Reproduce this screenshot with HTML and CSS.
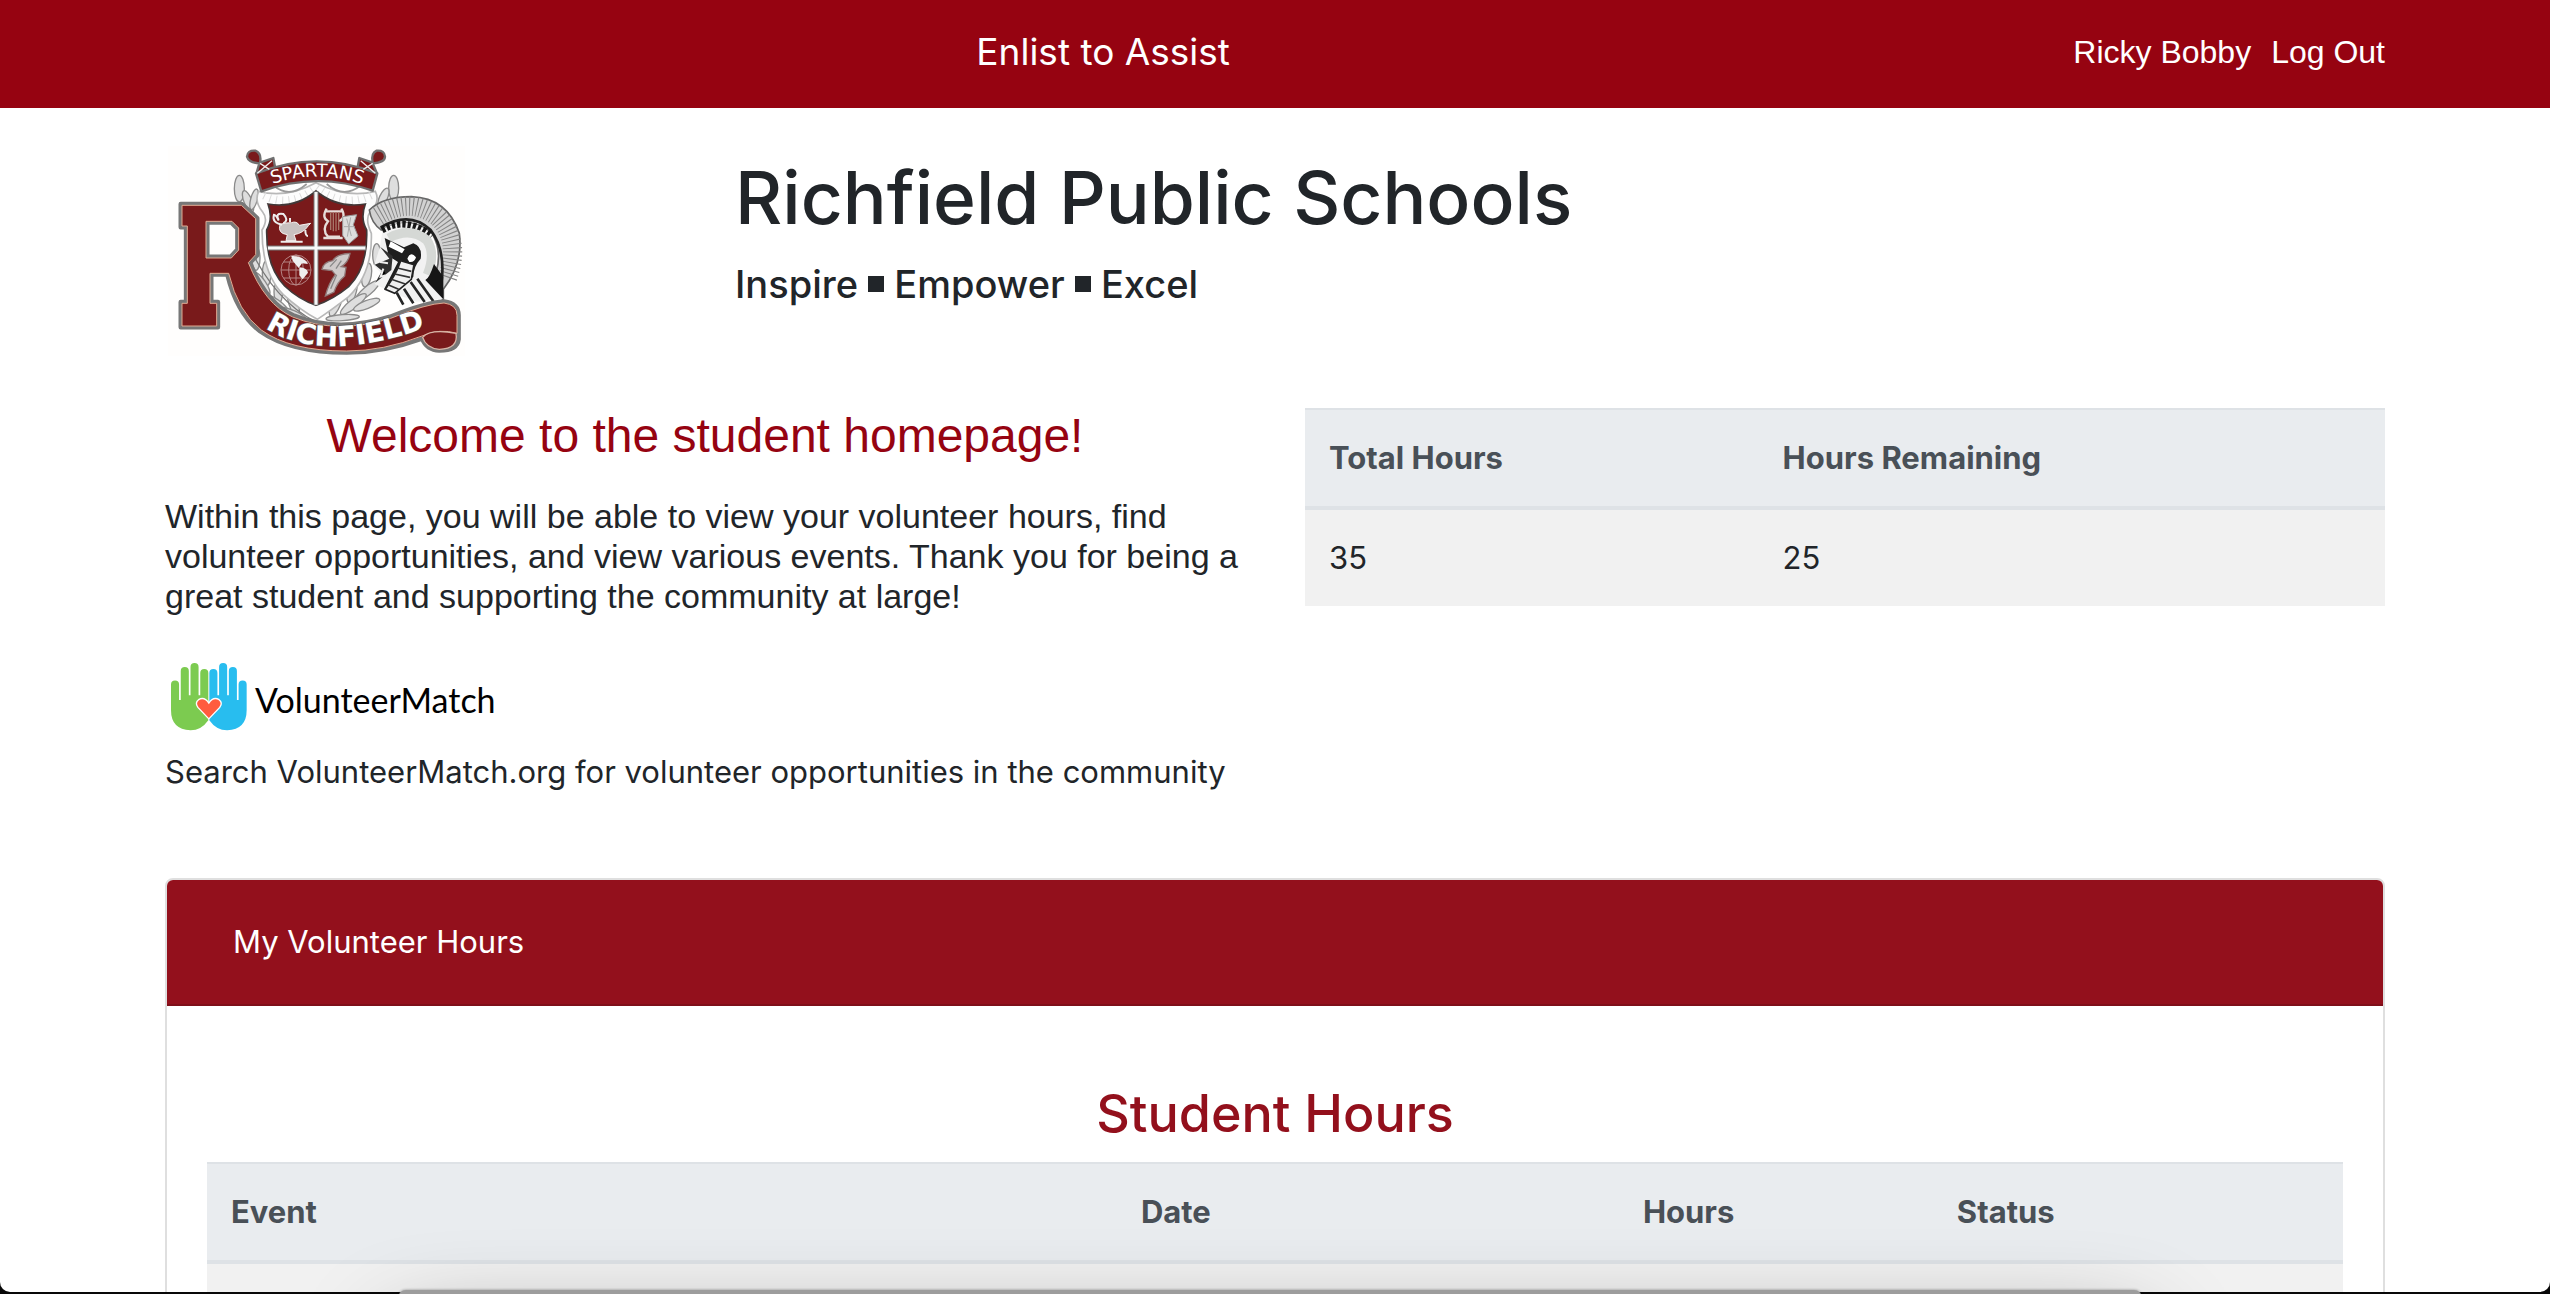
FILE: index.html
```html
<!DOCTYPE html>
<html lang="en">
<head>
<meta charset="utf-8">
<title>Enlist to Assist</title>
<link rel="stylesheet" href="styles.css">
</head>
<body>
<nav class="navbar">
  <div class="container navbar-inner">
    <span></span>
    <a class="brand" href="#">Enlist to Assist</a>
    <div class="nav-links">
      <a href="#">Ricky Bobby</a>
      <a href="#">Log Out</a>
    </div>
  </div>
</nav>

<header class="container school">
  <svg class="crest" viewBox="45 48 900 630" role="img" aria-label="Richfield Spartans crest">
    <defs>
      <path id="top-arc" d="M340 173 Q500 106 664 173"/>
      <path id="ribbon-arc" d="M302 556 C410 668 600 684 880 574"/>
    </defs>
    <rect x="54" y="48" width="900" height="630" fill="#fffefd"/>
    <!-- laurel leaves -->
    <g fill="#dedede" stroke="#8b8b8b" stroke-width="4">
      <ellipse cx="268" cy="176" rx="15" ry="40"/><ellipse cx="294" cy="214" rx="12" ry="34" transform="rotate(-22 294 214)"/>
      <ellipse cx="312" cy="208" rx="10" ry="32" transform="rotate(15 312 208)"/>
      <ellipse cx="731" cy="174" rx="15" ry="38"/><ellipse cx="700" cy="204" rx="12" ry="32" transform="rotate(24 700 204)"/>
      <ellipse cx="318" cy="385" rx="12" ry="36"/><ellipse cx="350" cy="430" rx="13" ry="38"/>
      <ellipse cx="335" cy="460" rx="12" ry="40" transform="rotate(-35 335 460)"/><ellipse cx="385" cy="486" rx="13" ry="34"/>
      <ellipse cx="378" cy="520" rx="12" ry="44" transform="rotate(-55 378 520)"/><ellipse cx="430" cy="518" rx="14" ry="40" transform="rotate(-18 430 518)"/>
      <ellipse cx="430" cy="553" rx="11" ry="44" transform="rotate(-66 430 553)"/>
      <ellipse cx="680" cy="375" rx="12" ry="34"/><ellipse cx="650" cy="435" rx="14" ry="36" transform="rotate(10 650 435)"/>
      <ellipse cx="606" cy="480" rx="14" ry="40" transform="rotate(12 606 480)"/><ellipse cx="652" cy="483" rx="13" ry="46" transform="rotate(50 652 483)"/>
      <ellipse cx="558" cy="520" rx="14" ry="42" transform="rotate(22 558 520)"/><ellipse cx="610" cy="522" rx="13" ry="48" transform="rotate(52 610 522)"/>
      <ellipse cx="650" cy="524" rx="12" ry="42" transform="rotate(68 650 524)"/><ellipse cx="578" cy="563" rx="9" ry="50" transform="rotate(86 578 563)"/>
    </g>
    <path d="M306 260 Q330 320 318 390 Q400 540 530 590" fill="none" stroke="#777" stroke-width="4"/>
    <!-- shield -->
    <path d="M326 184 Q410 206 498 158 Q590 206 676 184 Q692 215 660 246 Q644 268 664 310 Q668 430 596 500 Q545 540 502 568 Q450 540 400 494 Q336 430 336 300 Q356 268 338 246 Q312 214 326 184Z" fill="#fdfdfd" stroke="#b8b8b8" stroke-width="5"/>
    <path d="M342 196 Q420 236 499 172 Q580 236 664 196" fill="none" stroke="#dcdcdc" stroke-width="24" stroke-dasharray="3 16"/>
    <path d="M372 168 Q420 206 470 162 M530 162 Q580 206 630 168" fill="none" stroke="#999" stroke-width="5"/>
    <path d="M354 222 Q436 236 498 183 Q562 236 646 222 Q630 266 650 300 Q654 412 596 470 Q550 508 498 526 Q446 508 404 468 Q348 410 350 300 Q370 266 354 222Z" fill="#791a1b" stroke="#413838" stroke-width="5"/>
    <path d="M498 184 V526 M352 354 H648" stroke="#777" stroke-width="15"/>
    <path d="M498 186 V524 M354 354 H646" stroke="#f7f7f7" stroke-width="9"/>
    <!-- lamp -->
    <path d="M390 284 Q382 310 412 314 L408 332 H438 L432 314 Q460 310 476 286 L482 280 L448 286 Q440 272 424 278 Q398 278 390 284Z" fill="#c9c1c1" stroke="#f6f0f0" stroke-width="3"/>
    <path d="M396 284 Q364 278 372 254 Q378 254 386 272 M386 270 Q374 248 400 252 Q418 270 400 280 M420 276 V264 M466 300 Q466 318 474 318 M392 335 H458" fill="none" stroke="#eee" stroke-width="6"/>
    <!-- lyre and scroll -->
    <path d="M530 236 Q514 262 534 274 Q514 300 534 320 H570 M574 236 Q590 262 568 274 M526 244 H580 M520 324 H578" fill="none" stroke="#e6dcd9" stroke-width="7"/>
    <path d="M542 246 V300 M550 246 V304 M558 246 V304 M566 246 V300" stroke="#a77568" stroke-width="4"/>
    <path d="M578 260 L620 254 L610 284 L624 318 L596 342 L578 316Z" fill="#ddd" stroke="#999" stroke-width="3"/>
    <path d="M590 266 L604 318 M602 262 L592 320 M582 290 H614" stroke="#aaa" stroke-width="3"/>
    <!-- globe -->
    <g fill="none" stroke="#b58484" stroke-width="3">
      <circle cx="438" cy="420" r="45"/><ellipse cx="438" cy="420" rx="22" ry="45"/><path d="M393 420 H483 M400 396 H476 M400 444 H476 M438 375 V465"/>
    </g>
    <path d="M424 378 Q460 376 474 402 L456 400 L446 414 L428 392Z M448 412 Q472 414 474 428 L458 448 L448 436Z" fill="#eee"/>
    <!-- winged figure -->
    <path d="M600 370 Q560 372 548 392 Q520 396 516 418 L546 422 L556 434 Q536 460 526 498 L552 486 Q562 456 584 438 L588 412 L574 410 Q596 396 600 370Z" fill="#cfcaca" stroke="#8f7777" stroke-width="4"/>
    <path d="M560 388 L540 410 M574 392 L558 416 M560 434 L542 476" stroke="#888" stroke-width="4"/>
    <!-- Spartan helmet -->
    <path d="M658 240 Q700 200 784 200 Q892 204 928 310 Q940 400 880 478 L880 510 L840 470 Q888 380 846 310 Q790 254 694 300 Q664 280 658 240Z" fill="#d2d2d2" stroke="#666" stroke-width="5"/>
    <path d="M684 258 Q780 198 862 260 Q936 330 890 450" fill="none" stroke="#858585" stroke-width="58" stroke-dasharray="3 8"/>
    <path d="M692 292 Q780 240 842 300 Q888 360 874 462" fill="none" stroke="#222" stroke-width="8"/>
    <path d="M698 296 Q780 260 828 300 Q872 350 850 440 L880 506 L800 515 L730 490 L674 462 L694 430 L672 408 L690 350Z" fill="#f2f2f2"/>
    <path d="M696 300 Q770 258 846 318" fill="none" stroke="#161616" stroke-width="20" stroke-dasharray="10 6"/>
    <path d="M716 324 Q780 290 830 330 Q858 370 832 434" fill="none" stroke="#d5d8d5" stroke-width="28"/>
    <path d="M704 324 L762 352 L790 340 Q818 350 812 386 Q790 410 790 440 L748 480 L702 478 L744 396 L716 378Z" fill="#1e1e1e"/>
    <path d="M722 334 L764 358 L756 370 L716 350Z M772 386 Q782 362 798 382 Q794 398 778 396Z" fill="#fff"/>
    <path d="M690 350 L718 386 L674 404 L696 422 L676 458 L724 420 L728 378Z" fill="#303030"/>
    <path d="M690 396 L714 400 M700 416 L692 440 L708 436" stroke="#eee" stroke-width="6"/>
    <path d="M752 392 Q740 430 706 478 L734 490 L784 448 L792 404Z" fill="#f0f0f0" stroke="#222" stroke-width="5"/>
    <path d="M742 414 L784 424 M734 432 L780 442 M724 448 L766 462 M714 464 L746 478" stroke="#333" stroke-width="5"/>
    <path d="M852 402 Q838 446 826 450 L880 508 L880 440Z" fill="#161616"/>
    <path d="M782 456 L824 516 M802 446 L850 514 M762 476 L790 520 M740 488 L760 524" stroke="#252525" stroke-width="8"/>
    <!-- SPARTANS banner -->
    <g stroke="#707070" stroke-width="7" fill="#791a1b" stroke-linejoin="round">
      <path d="M320 128 L328 100 Q296 98 291 80 Q292 60 316 62 Q336 70 330 98 L370 84 L376 116 Z"/>
      <path d="M680 128 L668 100 Q704 98 705 80 Q704 60 680 62 Q662 70 668 98 L628 84 L622 116 Z"/>
      <path d="M318 130 Q500 58 682 130 L668 182 Q500 124 334 184Z"/>
    </g>
    <path d="M322 130 L366 92 M330 100 L358 118 M676 130 L632 92 M668 100 L640 118" stroke="#eee" stroke-width="4"/>
    <text class="crest-top"><textPath href="#top-arc" startOffset="50%" text-anchor="middle">SPARTANS</textPath></text>
    <!-- letter block with the ribbon that grows out of its leg -->
    <path fill-rule="evenodd" d="M92 222 H276 L322 264 V376 L300 398 Q350 520 430 556 Q560 610 720 560 Q830 516 882 514 Q926 520 926 556 V628 Q922 662 868 662 Q830 660 816 626 Q700 668 590 668 Q420 668 330 604 Q260 550 232 434 H184 V516 H204 V592 H92 V516 H108 V292 H92Z M172 278 V380 H242 L262 358 V296 L244 278Z" fill="#791a1b" stroke="#777" stroke-width="13" stroke-linejoin="round"/>
    <path fill-rule="evenodd" d="M96 226 H274 L317 266 V374 L295 398 Q345 524 428 561 Q560 615 722 565 Q830 521 882 519 Q921 524 921 556 V610 Q870 594 816 618 Q700 663 590 663 Q420 663 334 600 Q264 546 236 430 H180 V520 H200 V588 H96 V520 H112 V288 H96Z M168 274 V384 H244 L266 360 V294 L246 274Z" fill="#791a1b" stroke="#e0aa92" stroke-width="3"/>
    <path d="M818 622 Q840 596 918 610 Q926 656 868 658 Q828 654 818 622Z" fill="#791a1b" stroke="#d8b6a8" stroke-width="4"/>
    <text class="crest-ribbon"><textPath href="#ribbon-arc" startOffset="50%" text-anchor="middle">RICHFIELD</textPath></text>
  </svg>
  <div class="school-name">
    <h1>Richfield Public Schools</h1>
    <p class="motto">Inspire <i class="square"></i> Empower <i class="square"></i> Excel</p>
  </div>
</header>

<main class="container">
  <div class="intro">
    <section>
      <h2 class="welcome">Welcome to the student homepage!</h2>
      <p class="lead">Within this page, you will be able to view your volunteer hours, find volunteer opportunities, and view various events. Thank you for being a great student and supporting the community at large!</p>
      <a class="vm" href="#">
        <svg class="hands" viewBox="0 0 226 202" aria-hidden="true">
          <path fill="#7ccb50" d="M0 64a12 12 0 0 1 24 0v46h5V24a12 12 0 0 1 24 0v72h5V12a12 12 0 0 1 24 0v84h5V30a12 12 0 0 1 24 0V170Q90 200 58 200Q0 198 0 140Z"/>
          <path fill="#28bdef" d="M225 64a12 12 0 0 0-24 0v46h-5V24a12 12 0 0 0-24 0v72h-5V12a12 12 0 0 0-24 0v84h-5V30a12 12 0 0 0-24 0V170Q135 200 167 200Q225 198 225 140Z"/>
          <path fill="#ff5c3e" stroke="#fff" stroke-width="4" d="M112.500 166L80 132Q70 118 82 109Q99 99 112.500 119Q126 99 143 109Q155 118 145 132Z"/>
        </svg>
        <span class="vm-name">VolunteerMatch</span>
      </a>
      <p class="search-note">Search VolunteerMatch.org for volunteer opportunities in the community</p>
    </section>
    <section>
      <table class="table totals">
        <thead><tr><th scope="col">Total Hours</th><th scope="col">Hours Remaining</th></tr></thead>
        <tbody><tr><td>35</td><td>25</td></tr></tbody>
      </table>
    </section>
  </div>

  <section class="card">
    <div class="card-header"><button class="card-toggle" type="button">My Volunteer Hours</button></div>
    <div class="card-body">
      <h2 class="card-title">Student Hours</h2>
      <table class="table hours">
        <thead><tr><th scope="col">Event</th><th scope="col">Date</th><th scope="col">Hours</th><th scope="col">Status</th></tr></thead>
        <tbody><tr><td>&nbsp;</td><td></td><td></td><td></td></tr></tbody>
      </table>
    </div>
  </section>
</main>

<div class="window-behind"></div>
<div class="window-edge"></div>
</body>
</html>
```
FILE: styles.css
```css
* { box-sizing: border-box; }

body {
  margin: 0;
  height: 100vh;
  overflow: hidden;
  background: #fff;
  color: #212529;
  font-family: Inter, "Liberation Sans", sans-serif;
  font-size: 31px;
  line-height: 48px;
}

h1, h2, p { margin: 0; font-weight: 500; }
a { color: inherit; text-decoration: none; }

.container {
  max-width: 2280px;
  margin: 0 auto;
  padding: 0 30px;
}

/* top bar */
.navbar { background: #960311; color: #fff; padding: 22px 0 26px; }
.navbar-inner {
  display: flex;
  align-items: center;
  justify-content: space-between;
  height: 60px;
}
.brand { margin-right: 32px; font-size: 37px; }
.nav-links {
  display: flex;
  gap: 20px;
  font: 32px/56px "Liberation Sans", Arial, sans-serif;
}

/* school header */
.school {
  display: grid;
  grid-template-columns: 1fr 3fr;
  padding-top: 38px;
}
.crest { display: block; width: 300px; height: 210px; }
.crest text { font-family: "DejaVu Sans", sans-serif; fill: #fff; }
.crest-top { font-size: 54px; }
.crest-ribbon {
  font-size: 84px;
  font-weight: 700;
  stroke: #555;
  stroke-width: 4px;
  paint-order: stroke;
}
.school-name { padding: 4px 0 0 15px; }
.school-name h1 { font-size: 73px; line-height: 96px; }
.motto { margin-top: 14px; font-size: 38px; line-height: 48px; }
.square {
  display: inline-block;
  width: 16px;
  height: 16px;
  margin: 0 0 6px;
  background: #212529;
}

/* introduction */
.intro {
  display: grid;
  grid-template-columns: 1fr 1fr;
  gap: 60px;
  margin-top: 52px;
}
.welcome {
  font: 48px/56px "Liberation Sans", Arial, sans-serif;
  color: #960311;
  text-align: center;
}
.lead {
  margin-top: 32px;
  font: 34px/40px "Liberation Sans", Arial, sans-serif;
}
.vm {
  display: flex;
  align-items: center;
  gap: 8px;
  margin: 47px 0 17px 6px;
  color: #000;
  font-family: Lato, sans-serif;
  font-size: 34px;
}
.vm-name { padding-top: 6px; }
.hands { width: 76px; height: 68px; }
.search-note { font-weight: 400; }

/* tables */
.table {
  width: 100%;
  border-collapse: separate;
  border-spacing: 0;
  table-layout: fixed;
}
.table th, .table td {
  padding: 24px;
  text-align: left;
}
.table th {
  background: #e9ecef;
  border-top: 2px solid #dee2e6;
  border-bottom: 4px solid #dee2e6;
  color: #495057;
  font-weight: 700;
}
.table td { background: #f1f1f1; }
.totals th:first-child { width: 42%; }

/* card */
.card {
  margin-top: 82px;
  border: 2px solid #dfdfdf;
  border-radius: 8px;
  overflow: hidden;
}
.card-header {
  padding: 24px 40px;
  background: #93101c;
  border-bottom: 2px solid #7f0f19;
}
.card-toggle {
  display: block;
  padding: 14px 26px;
  border: 0;
  background: none;
  color: #fff;
  font: inherit;
}
.card-body { padding: 74px 40px 40px; }
.card-title {
  margin-bottom: 15px;
  color: #93101c;
  font-size: 52px;
  line-height: 67px;
  text-align: center;
}
.hours th:nth-child(1) { width: 42.6%; }
.hours th:nth-child(2) { width: 23.5%; }
.hours th:nth-child(3) { width: 14.7%; }

/* desktop window peeking in below the page, with its shadow */
.window-behind {
  position: fixed;
  top: calc(100vh - 4px);
  left: 398px;
  right: 408px;
  height: 400px;
  border-radius: 8px;
  background: #9d9d9d;
  box-shadow: 0 50px 100px rgba(0, 0, 0, .45), 0 0 3px rgba(0, 0, 0, .4);
  z-index: 2;
}
.window-edge {
  position: fixed;
  inset: 0 0 2px;
  border-radius: 0 0 10px 10px;
  box-shadow: 0 0 0 20px #080808;
  z-index: 1;
}
```
